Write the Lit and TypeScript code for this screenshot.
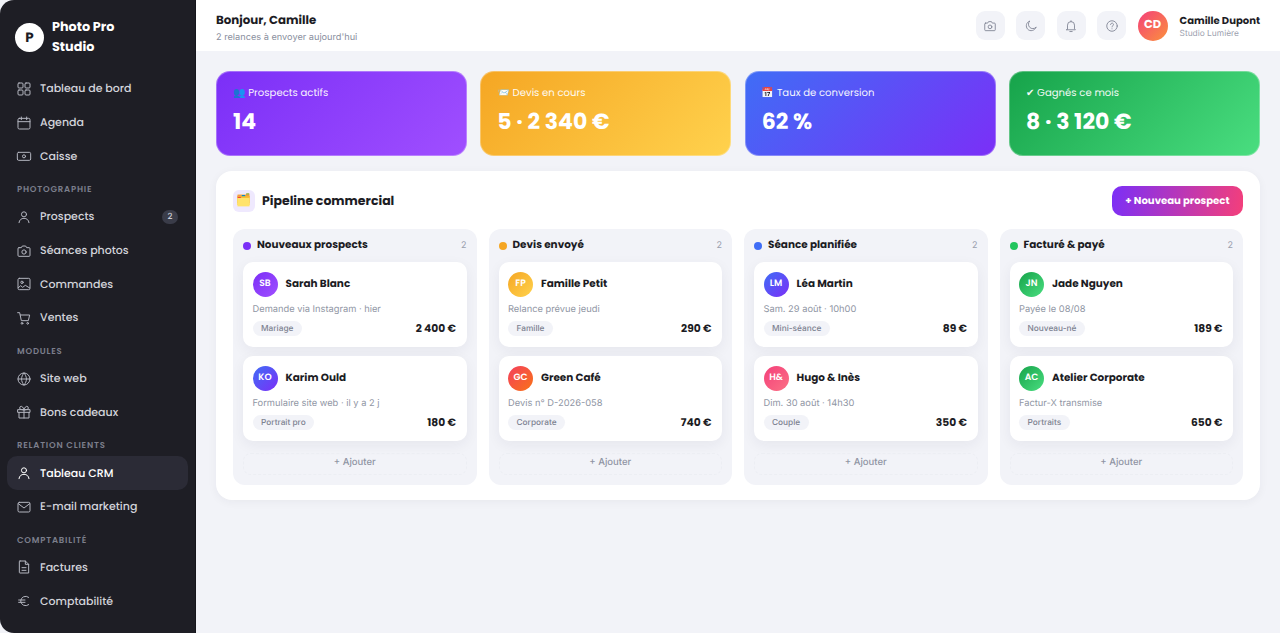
import { LitElement, html, css, svg } from "lit";
import { customElement } from "lit/decorators.js";

const ic = (p: any) => html`<svg class="ic" viewBox="0 0 24 24" fill="none" stroke="currentColor" stroke-width="1.500" stroke-linecap="round" stroke-linejoin="round">${p}</svg>`;
const I: Record<string, any> = {
  grid: svg`<rect x="3" y="3" width="7.500" height="7.500" rx="1.500"/><rect x="13.500" y="3" width="7.500" height="7.500" rx="1.500"/><rect x="3" y="13.500" width="7.500" height="7.500" rx="1.500"/><rect x="13.500" y="13.500" width="7.500" height="7.500" rx="1.500"/>`,
  cal: svg`<rect x="3" y="5" width="18" height="16" rx="2"/><path d="M3 10h18M8 3v4M16 3v4"/>`,
  cash: svg`<rect x="2" y="6.500" width="20" height="12" rx="2"/><circle cx="12" cy="12.500" r="2.300"/>`,
  user: svg`<circle cx="12" cy="8" r="3.800"/><path d="M4.500 20.500c.5-4.200 3.500-6.500 7.500-6.500s7 2.300 7.500 6.500"/>`,
  cam: svg`<path d="M4.500 7H8l1.500-2.500h5L16 7h3.500A1.500 1.500 0 0 1 21 8.500v10a1.500 1.500 0 0 1-1.500 1.500h-15A1.500 1.500 0 0 1 3 18.500v-10A1.500 1.500 0 0 1 4.500 7z"/><circle cx="12" cy="13.500" r="3.200"/>`,
  img: svg`<rect x="3" y="3.500" width="18" height="17" rx="2"/><circle cx="9" cy="9.500" r="1.800"/><path d="M3.500 17.500l3.500-3 3 2.500 4-3 6.500 4"/>`,
  cart: svg`<path d="M2.500 4h3l2.500 12h10.500l2-8.500H6.500"/><circle cx="9" cy="20" r="1.300"/><circle cx="17.500" cy="20" r="1.300"/>`,
  globe: svg`<circle cx="12" cy="12" r="9"/><path d="M3 12h18M12 3c-5 5.500-5 12.500 0 18M12 3c5 5.500 5 12.500 0 18"/>`,
  gift: svg`<rect x="3" y="8.500" width="18" height="4"/><path d="M4.500 12.500V21h15v-8.500M12 8.500V21M12 8.500S10.500 3.500 8 3.500a2.500 2.500 0 0 0 0 5zM12 8.500s1.500-5 4-5a2.500 2.500 0 0 1 0 5z"/>`,
  mail: svg`<rect x="3" y="5" width="18" height="14.500" rx="2"/><path d="M3.500 7l8.500 6.500L20.500 7"/>`,
  doc: svg`<path d="M6 3h8l5 5v13H6a1 1 0 0 1-1-1V4a1 1 0 0 1 1-1z"/><path d="M14 3v5h5M9 13h6M9 17h6"/>`,
  eur: svg`<path d="M19 6.500A7.500 7.500 0 0 0 7 12a7.500 7.500 0 0 0 12 5.500M4 10.500h9.500M4 14h9.500"/>`,
  moon: svg`<path d="M20.500 14.500A8.500 8.500 0 1 1 10 3.500a7 7 0 0 0 10.500 11z"/>`,
  bell: svg`<path d="M6 17V10.500a6 6 0 0 1 12 0V17l1.500 1.500h-15zM10 21.500h4M12 3v1.500"/>`,
  help: svg`<circle cx="12" cy="12" r="9"/><path d="M9.500 9.500a2.500 2.500 0 1 1 3.800 2.100c-.8.500-1.300 1-1.300 2"/><path d="M12 16.800v.1"/>`,
};

type Nav = { t: string; i: string; badge?: string; on?: boolean };
const NAV: { h?: string; items: Nav[] }[] = [
  { items: [{ t: "Tableau de bord", i: "grid" }, { t: "Agenda", i: "cal" }, { t: "Caisse", i: "cash" }] },
  { h: "PHOTOGRAPHIE", items: [{ t: "Prospects", i: "user", badge: "2" }, { t: "Séances photos", i: "cam" }, { t: "Commandes", i: "img" }, { t: "Ventes", i: "cart" }] },
  { h: "MODULES", items: [{ t: "Site web", i: "globe" }, { t: "Bons cadeaux", i: "gift" }] },
  { h: "RELATION CLIENTS", items: [{ t: "Tableau CRM", i: "user", on: true }, { t: "E-mail marketing", i: "mail" }] },
  { h: "COMPTABILITÉ", items: [{ t: "Factures", i: "doc" }, { t: "Comptabilité", i: "eur" }] },
];
const STATS = [
  { c: "s1", l: "👥 Prospects actifs", v: "14" },
  { c: "s2", l: "📨 Devis en cours", v: "5 · 2 340 €" },
  { c: "s3", l: "📅 Taux de conversion", v: "62 %" },
  { c: "s4", l: "✔ Gagnés ce mois", v: "8 · 3 120 €" },
];
const COLS = [
  { t: "Nouveaux prospects", d: "#7b2ff7", cards: [
    { a: "SB", g: "g-violet", n: "Sarah Blanc", s: "Demande via Instagram · hier", tag: "Mariage", p: "2 400 €" },
    { a: "KO", g: "g-blue", n: "Karim Ould", s: "Formulaire site web · il y a 2 j", tag: "Portrait pro", p: "180 €" } ] },
  { t: "Devis envoyé", d: "#f5a623", cards: [
    { a: "FP", g: "g-amber", n: "Famille Petit", s: "Relance prévue jeudi", tag: "Famille", p: "290 €" },
    { a: "GC", g: "g-red", n: "Green Café", s: "Devis n° D-2026-058", tag: "Corporate", p: "740 €" } ] },
  { t: "Séance planifiée", d: "#3f6df6", cards: [
    { a: "LM", g: "g-blue", n: "Léa Martin", s: "Sam. 29 août · 10h00", tag: "Mini-séance", p: "89 €" },
    { a: "H&", g: "g-pink", n: "Hugo & Inès", s: "Dim. 30 août · 14h30", tag: "Couple", p: "350 €" } ] },
  { t: "Facturé & payé", d: "#22c55e", cards: [
    { a: "JN", g: "g-green", n: "Jade Nguyen", s: "Payée le 08/08", tag: "Nouveau-né", p: "189 €" },
    { a: "AC", g: "g-green", n: "Atelier Corporate", s: "Factur-X transmise", tag: "Portraits", p: "650 €" } ] },
];

@customElement("app-root")
export class AppRoot extends LitElement {
  static styles = css`
    :host { display: block; height: 633px; overflow: hidden; background: #f2f3f8; font-family: "Poppins", "Inter", "Liberation Sans", sans-serif; color: #1c1c24; text-rendering: geometricPrecision; }
    .app { display: flex; height: 633px; }
    .side { width: 196px; flex: none; box-sizing: border-box; background: #1e1e25; color: #d2d3da; padding: 15.500px 7px 0; border-radius: 14px 0 0 14px; border-right: 1px solid #15151b; overflow: hidden; }
    .brand { display: flex; align-items: center; gap: 8px; padding: 0 8px; height: 44px; margin-bottom: 12.500px; color: #fff; font-weight: 700; font-size: 12.800px; line-height: 19.500px; }
    .logo { width: 29px; height: 29px; border-radius: 50%; background: #fff; color: #1c1c24; display: grid; place-items: center; font-size: 13.500px; font-weight: 700; flex: none; }
    .h { box-sizing: border-box; font-size: 8.500px; font-weight: 600; letter-spacing: .8px; color: #7c7f8c; padding: 6px 10px 0; height: 27px; display: flex; align-items: center; }
    .it { display: flex; align-items: center; height: 33.700px; border-radius: 10px; padding: 0 10px 0 9px; gap: 8px; font-size: 11px; font-weight: 500; }
    .it.on { background: #2b2b36; color: #fff; }
    .ic { width: 16px; height: 16px; flex: none; display: block; }
    .it .ic { color: #b4b6c0; }
    .it.on .ic { color: #fff; }
    .badge { margin-left: auto; width: 16px; height: 14px; border-radius: 7px; background: #3a3c49; color: #c9cbd3; font-size: 8.500px; display: grid; place-items: center; }
    .main { flex: 1; min-width: 0; display: flex; flex-direction: column; }
    .top { height: 51px; background: #fff; display: flex; align-items: center; padding: 0 20px; flex: none; }
    .hello { flex: 1; padding-top: 5px; }
    .hello b { display: block; font-size: 11.800px; line-height: 18px; font-weight: 700; }
    .hello small { display: block; font-family: Inter, sans-serif; font-size: 9.200px; line-height: 15px; color: #8a8f9e; }
    .tb { width: 29px; height: 29px; border-radius: 9px; background: #f2f3f8; color: #7f8493; display: grid; place-items: center; margin-right: 11.500px; }
    .tb .ic { width: 14px; height: 14px; }
    .av-top { width: 30px; height: 30px; border-radius: 50%; background: linear-gradient(135deg, #f43f7a, #fb923c); color: #fff; font-size: 11.500px; font-weight: 700; display: grid; place-items: center; }
    .who { margin-left: 12px; padding-top: 3px; }
    .who b { display: block; font-size: 10.050px; font-weight: 700; line-height: 14px; }
    .who small { display: block; font-family: Inter, sans-serif; font-size: 8.400px; line-height: 13px; color: #9ba0ae; }
    .content { padding: 20px 20px 0; display: flex; flex-direction: column; gap: 15.500px; }
    .stats { display: grid; grid-template-columns: repeat(4, 1fr); gap: 13.300px; }
    .stat { height: 84.500px; box-sizing: border-box; border-radius: 14px; color: #fff; padding: 14px 16px; border: 1px solid rgba(255,255,255,.3); background-origin: border-box; background-clip: border-box; }
    .stat .l { font-size: 10.100px; line-height: 14px; opacity: .95; }
    .stat .v { font-size: 22px; line-height: 30px; font-weight: 700; margin-top: 7px; white-space: pre; }
    .s1 { background-image: linear-gradient(135deg, #7b2ff7, #a04fff); }
    .s2 { background-image: linear-gradient(135deg, #f5a623, #ffd24d); }
    .s3 { background-image: linear-gradient(135deg, #3f6df6, #7b2ff7); }
    .s4 { background-image: linear-gradient(135deg, #16a34a, #4ade80); }
    .panel { background: #fff; border-radius: 16px; padding: 15px 17px 15px; box-shadow: 0 2px 10px rgba(30,30,60,.05); }
    .ph { display: flex; align-items: center; height: 30px; margin-bottom: 13px; }
    .ph .pi { width: 22px; height: 22px; border-radius: 6px; background: #efe9fe; display: grid; place-items: center; font-size: 12px; margin-right: 7px; }
    .ph h2 { flex: 1; margin: 0; padding-top: 1px; font-size: 12.500px; font-weight: 700; }
    .btn { height: 30px; padding: 0 13.500px; border-radius: 10px; background: linear-gradient(100deg, #7b2ff7, #f43f7a); color: #fff; display: flex; align-items: center; font-size: 10.100px; font-weight: 700; }
    .cols { display: grid; grid-template-columns: repeat(4, 1fr); gap: 12px; }
    .col { background: #f2f3f8; border-radius: 12px; padding: 10px; }
    .ch { display: flex; align-items: center; height: 13px; margin-bottom: 10px; }
    .dot { width: 8px; height: 8px; border-radius: 50%; margin-right: 6px; }
    .ch b { flex: 1; font-size: 10.450px; font-weight: 700; padding-bottom: 1px; }
    .ch span { font-family: Inter, sans-serif; font-size: 9px; color: #9aa0ae; }
    .card { background: #fff; border-radius: 10px; padding: 9.500px 10.500px 0 9.500px; margin-bottom: 9px; height: 85px; box-sizing: border-box; box-shadow: 0 4px 14px rgba(30,30,70,.06); }
    .cn { display: flex; align-items: center; gap: 8px; height: 25px; }
    .av { width: 25px; height: 25px; border-radius: 50%; color: #fff; font-size: 9.200px; font-weight: 600; display: grid; place-items: center; flex: none; }
    .cn b { font-size: 10.450px; font-weight: 700; padding-bottom: 1px; }
    .sub { font-family: Inter, sans-serif; font-size: 9.300px; line-height: 13px; color: #9096a4; margin-top: 6px; }
    .cf { display: flex; align-items: center; justify-content: space-between; margin-top: 5px; }
    .tag { height: 15px; padding: 0 8.500px; border-radius: 8px; background: #f2f3f8; color: #7d8291; font-family: Inter, sans-serif; font-size: 8.300px; font-weight: 500; display: flex; align-items: center; }
    .price { font-size: 10.700px; font-weight: 700; }
    .add { box-sizing: border-box; height: 22px; margin-top: 12px; text-align: center; font-family: Inter, sans-serif; font-size: 9.500px; line-height: 17px; font-weight: 500; color: #8f94a3; border: 1px dashed #eceef3; border-radius: 8px; }
    .g-violet { background: linear-gradient(135deg, #7b2ff7, #a04fff); }
    .g-blue { background: linear-gradient(135deg, #3f6df6, #7b2ff7); }
    .g-amber { background: linear-gradient(135deg, #f5a623, #ffd24d); }
    .g-red { background: linear-gradient(135deg, #f43f5e, #f97316); }
    .g-pink { background: linear-gradient(135deg, #f43f7a, #fb7185); }
    .g-green { background: linear-gradient(135deg, #16a34a, #4ade80); }
  `;

  render() {
    return html`<div class="app">
      <aside class="side">
        <div class="brand"><div class="logo">P</div><div>Photo Pro<br />Studio</div></div>
        ${NAV.map((g) => html`<div class="group">
          ${g.h ? html`<div class="h">${g.h}</div>` : ""}
          ${g.items.map((n) => html`<div class="it ${n.on ? "on" : ""}">${ic(I[n.i])}<span>${n.t}</span>${n.badge ? html`<span class="badge">${n.badge}</span>` : ""}</div>`)}
        </div>`)}
      </aside>
      <div class="main">
        <header class="top">
          <div class="hello"><b>Bonjour, Camille</b><small>2 relances à envoyer aujourd'hui</small></div>
          ${["cam", "moon", "bell", "help"].map((k) => html`<div class="tb">${ic(I[k])}</div>`)}
          <div class="av-top">CD</div>
          <div class="who"><b>Camille Dupont</b><small>Studio Lumière</small></div>
        </header>
        <div class="content">
          <section class="stats">${STATS.map((s) => html`<div class="stat ${s.c}"><div class="l">${s.l}</div><div class="v">${s.v}</div></div>`)}</section>
          <section class="panel">
            <div class="ph"><div class="pi">🗂️</div><h2>Pipeline commercial</h2><div class="btn">+ Nouveau prospect</div></div>
            <div class="cols">${COLS.map((c) => html`<div class="col">
              <div class="ch"><i class="dot" style="background:${c.d}"></i><b>${c.t}</b><span>2</span></div>
              ${c.cards.map((k) => html`<div class="card">
                <div class="cn"><div class="av ${k.g}">${k.a}</div><b>${k.n}</b></div>
                <div class="sub">${k.s}</div>
                <div class="cf"><span class="tag">${k.tag}</span><span class="price">${k.p}</span></div>
              </div>`)}
              <div class="add">+ Ajouter</div>
            </div>`)}</div>
          </section>
        </div>
      </div>
    </div>`;
  }
}
